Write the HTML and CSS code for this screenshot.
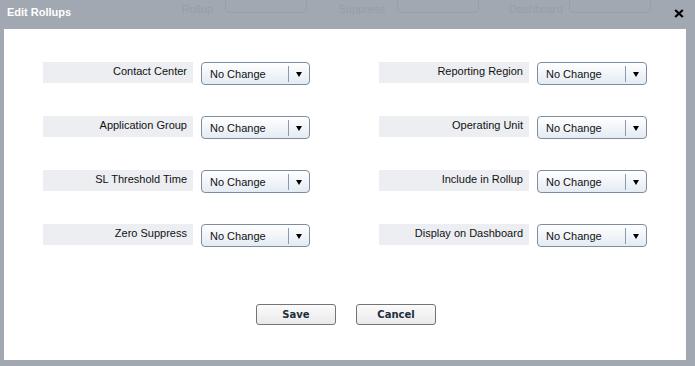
FILE: index.html
```html
<!DOCTYPE html>
<html lang="en">
<head>
    <meta charset="UTF-8">
    <title>Edit Rollups</title>
    <link rel="stylesheet" href="styles.css">
</head>
<body>

<div class="backdrop">
    <div class="ghost-top">
        <span class="ghost-label">Rollup</span><span class="ghost-select"></span>
        <span class="ghost-label">Suppress</span><span class="ghost-select"></span>
        <span class="ghost-label">Dashboard</span><span class="ghost-select"></span>
    </div>
</div>

<div class="dialog">
    <div class="dialog-head">
        <span class="dialog-title">Edit Rollups</span>
        <svg class="close" width="10" height="9" viewBox="0 0 10 9">
            <path d="M1.2 1 L8.8 8 M8.8 1 L1.2 8" stroke="#000" stroke-width="2.2" fill="none"/>
        </svg>
    </div>

    <div class="dialog-body">
        <div class="fields">
            <div class="field">
                <div class="label">Contact Center</div>
                <div class="select"><span>No Change</span><i class="arrow"></i></div>
            </div>
            <div class="field">
                <div class="label">Reporting Region</div>
                <div class="select"><span>No Change</span><i class="arrow"></i></div>
            </div>
            <div class="field">
                <div class="label">Application Group</div>
                <div class="select"><span>No Change</span><i class="arrow"></i></div>
            </div>
            <div class="field">
                <div class="label">Operating Unit</div>
                <div class="select"><span>No Change</span><i class="arrow"></i></div>
            </div>
            <div class="field">
                <div class="label">SL Threshold Time</div>
                <div class="select"><span>No Change</span><i class="arrow"></i></div>
            </div>
            <div class="field">
                <div class="label">Include in Rollup</div>
                <div class="select"><span>No Change</span><i class="arrow"></i></div>
            </div>
            <div class="field">
                <div class="label">Zero Suppress</div>
                <div class="select"><span>No Change</span><i class="arrow"></i></div>
            </div>
            <div class="field">
                <div class="label">Display on Dashboard</div>
                <div class="select"><span>No Change</span><i class="arrow"></i></div>
            </div>
        </div>

        <div class="buttons">
            <button>Save</button>
            <button>Cancel</button>
        </div>
    </div>
</div>

</body>
</html>
```

FILE: styles.css
```css
body {
    margin: 0;
    width: 695px;
    height: 366px;
    overflow: hidden;
    position: relative;
    background: #a1a8b2;
    font-family: "Liberation Sans", Arial, sans-serif;
    font-size: 11px;
}
.backdrop {
    position: absolute;
    inset: 0;
    color: #979ea8;
    font-size: 11px;
}
.ghost-top {
    position: absolute;
    top: -6px;
    left: 165px;
    display: flex;
    gap: 12px;
    align-items: flex-start;
}
.ghost-label {
    width: 48px;
    text-align: right;
    margin-top: 9px;
}
.ghost-select {
    width: 80px;
    height: 17px;
    border: 1px solid #989fa9;
    border-radius: 4px;
    margin-right: 18px;
}
.dialog {
    position: relative;
    z-index: 1;
}
.dialog-head {
    height: 29px;
    display: flex;
    align-items: flex-start;
    justify-content: space-between;
    padding: 0 11px 0 7px;
}
.dialog-title {
    color: #fff;
    font-weight: bold;
    font-size: 11px;
    margin-top: 6px;
}
.close {
    margin-top: 9px;
}
.dialog-body {
    background: #fff;
    margin: 0 9px 0 4px;
    height: 331px;
    padding: 33px 0 0 39px;
    box-sizing: border-box;
}
.fields {
    display: grid;
    grid-template-columns: 267px 268px;
    column-gap: 69px;
    row-gap: 31px;
}
.field {
    display: flex;
    gap: 8px;
    align-items: flex-start;
}
.label {
    width: 150px;
    height: 21px;
    flex: none;
    box-sizing: border-box;
    padding: 3px 6px 0 0;
    text-align: right;
    color: #111;
    background: #eceef2;
}
.select {
    flex: 1;
    height: 23px;
    box-sizing: border-box;
    border: 1px solid #7d8ca3;
    border-radius: 4px;
    background: linear-gradient(#ffffff, #e4ebf3);
    display: flex;
    align-items: center;
    color: #111;
}
.select span {
    flex: 1;
    padding: 1px 0 0 8px;
    border-right: 1px solid #8a9ab0;
    line-height: 15px;
}
.arrow {
    width: 0;
    height: 0;
    margin: 1px 7px 0 7px;
    border-left: 3.5px solid transparent;
    border-right: 3.5px solid transparent;
    border-top: 5px solid #000;
}
.buttons {
    display: flex;
    justify-content: center;
    gap: 20px;
    margin: 57px 37px 0 0;
}
.buttons button {
    width: 80px;
    height: 21px;
    border: 1px solid #747474;
    border-radius: 3px;
    background: linear-gradient(#fbfbfb, #e9e9ec);
    font-family: "DejaVu Sans", Verdana, sans-serif;
    font-weight: bold;
    font-size: 10px;
    color: #1b2d3b;
    padding: 0;
}
```
